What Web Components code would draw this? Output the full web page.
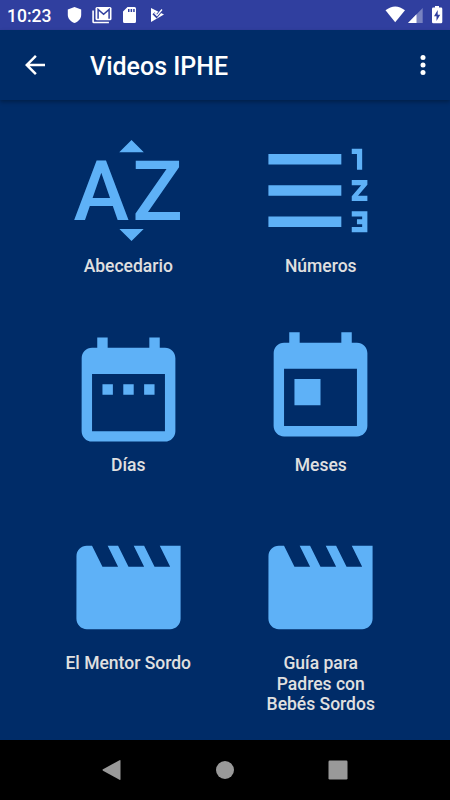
<!DOCTYPE html>
<html lang="es">
<head>
<meta charset="utf-8">
<meta name="viewport" content="width=device-width, initial-scale=1">
<title>Videos IPHE</title>
<style>
    html, body {
        margin: 0;
        height: 100%;
    }

    body {
        font-family: Roboto, "Noto Sans", sans-serif;
        overflow: hidden;
    }
</style>
</head>
<body>

<iphe-screen>
    <status-bar slot="status" time="10:23"></status-bar>
    <app-bar slot="bar">Videos IPHE</app-bar>
    <menu-tile icon="alphabet">Abecedario</menu-tile>
    <menu-tile icon="numbers">Números</menu-tile>
    <menu-tile icon="days">Días</menu-tile>
    <menu-tile icon="months">Meses</menu-tile>
    <menu-tile icon="movie">El Mentor Sordo</menu-tile>
    <menu-tile icon="movie">Guía para Padres con Bebés Sordos</menu-tile>
    <nav-bar slot="nav"></nav-bar>
</iphe-screen>

<script>
// Icons of the menu, all in a 24x24 box
const ICONS = {
    alphabet: `
        <path d="M14.94 4.66h-4.72l2.36-2.36zM10.25 19.37h4.66l-2.33 2.33z"/>
        <g font-size="16.1" font-weight="500">
            <text x="1.45" y="17.73">A</text>
            <text x="12.7" y="17.73">Z</text>
        </g>`,
    numbers: '<path d="M18 17h2v.5h-1v1h1v.5h-2v1h3v-4h-3v1zm1-9h1V4h-2v1h1v3zm-1 3h1.8L18 13.1v.9h3v-1h-1.8l1.8-2.1V10h-3v1zM2 5v2h14V5H2zm0 14h14v-2H2v2zm0-6h14v-2H2v2z"/>',
    days: '<path d="M9 11H7v2h2v-2zm4 0h-2v2h2v-2zm4 0h-2v2h2v-2zm2-7h-1V2h-2v2H8V2H6v2H5c-1.11 0-1.99.9-1.99 2L3 20c0 1.1.89 2 2 2h14c1.1 0 2-.9 2-2V6c0-1.1-.9-2-2-2zm0 16H5V9h14v11z"/>',
    months: '<path d="M19 3h-1V1h-2v2H8V1H6v2H5c-1.11 0-1.99.9-1.99 2L3 19c0 1.1.89 2 2 2h14c1.1 0 2-.9 2-2V5c0-1.1-.9-2-2-2zm0 16H5V8h14v11zM7 10h5v5H7z"/>',
    movie: '<path d="M18 4l2 4h-3l-2-4h-2l2 4h-3l-2-4H8l2 4H7L5 4H4c-1.1 0-1.99.9-1.99 2L2 18c0 1.1.9 2 2 2h16c1.1 0 2-.9 2-2V4h-4z"/>'
};

class IpheScreen extends HTMLElement {

    constructor() {
        super();
        this.attachShadow({ mode: 'open' });
        this.shadowRoot.innerHTML = `
            <style>
                :host {
                    display: flex;
                    flex-direction: column;
                    height: 100vh;
                    background: #002c68;
                }

                main {
                    flex: 1;
                    display: grid;
                    grid-template-columns: repeat(2, 192.5px);
                    grid-auto-rows: 198.6px;
                    justify-content: center;
                    align-content: start;
                    padding: 28px 1px 0 0;
                }
            </style>
            <slot name="status"></slot>
            <slot name="bar"></slot>
            <main><slot></slot></main>
            <slot name="nav"></slot>
        `;
    }

}

class StatusBar extends HTMLElement {

    constructor() {
        super();
        this.attachShadow({ mode: 'open' });
        this.shadowRoot.innerHTML = `
            <style>
                :host {
                    display: flex;
                    align-items: center;
                    height: 30px;
                    box-sizing: border-box;
                    padding: 0 7px;
                    background: #303f9f;
                    color: #fff;
                    font-size: 17.5px;
                    font-weight: 500;
                }

                span {
                    width: 60px;
                    padding-top: 2px;
                }

                svg {
                    display: block;
                    fill: #fff;
                    flex: none;
                }

                .left {
                    flex: 1;
                }
            </style>
            <span id="time"></span>
            <div class="left">
                <svg width="98" height="30" viewBox="67 0 98 30">
                    <path d="M74.500 7l6.700 2.500v5.500c0 3.500-2.800 6.700-6.700 8-3.900-1.300-6.700-4.500-6.700-8V9.500z"/>
                    <path d="M92.300 10.500h1.600v11.300h15v1.500H93.800q-1.500 0-1.500-1.500z"/>
                    <rect x="95.500" y="7" width="16" height="13.300" rx="1.500"/>
                    <path d="M98.100 18.700V9.500l5.500 4.700 5.500-4.700v9.200" fill="none" stroke="#303f9f" stroke-width="1.500"/>
                    <path fill-rule="evenodd" d="M127.500 7h7q1.500 0 1.500 1.500v13q0 1.500-1.500 1.500h-10q-1.500 0-1.500-1.500V11.500zM128 9v3h1.500V9zM130.600 9v3h1.500V9zM133.200 9v3h1.500V9z"/>
                    <path d="M151 8l13 6.500L151 22z"/>
                    <path d="M153.500 13.300l3 3L162.500 9" fill="none" stroke="#303f9f" stroke-width="3"/>
                    <path d="M154.500 13l2.500 2.500 5-6" fill="none" stroke="#fff" stroke-width="1.300"/>
                </svg>
            </div>
            <svg width="59" height="30" viewBox="384 0 59 30">
                <path d="M395.200 22.300L385.500 10.200q9.700-7.600 19.500 0z"/>
                <path d="M408 23L422.700 8v15z" fill-opacity=".35"/>
                <path d="M408 23l8.500-8.700V23z"/>
                <path fill-rule="evenodd" d="M435 6h4v1.600h2q1.300 0 1.300 1.300v13q0 1.300-1.300 1.300h-7.700q-1.300 0-1.300-1.300v-13q0-1.300 1.300-1.300h1.700zM437.700 10l-3.700 6.300h2.500V21l3.700-6.300h-2.500z"/>
            </svg>
        `;
    }

    connectedCallback() {
        this.shadowRoot.querySelector('#time').textContent = this.getAttribute('time');
    }

}

class AppBar extends HTMLElement {

    constructor() {
        super();
        this.attachShadow({ mode: 'open' });
        this.shadowRoot.innerHTML = `
            <style>
                :host {
                    display: flex;
                    align-items: center;
                    height: 70px;
                    box-sizing: border-box;
                    padding: 0 12.5px 0 20px;
                    background: #002c68;
                    color: #fff;
                    box-shadow: 0 2px 4px rgba(0, 0, 0, 0.3);
                }

                h1 {
                    flex: 1;
                    margin: 0 0 0 40px;
                    font-size: 25px;
                    font-weight: 500;
                    line-height: 30px;
                    padding-top: 4px;
                }

                svg {
                    width: 30px;
                    height: 30px;
                    fill: currentColor;
                }
            </style>
            <svg viewBox="0 0 24 24"><path d="M20 11H7.830l5.590-5.590L12 4l-8 8 8 8 1.410-1.410L7.830 13H20v-2z"/></svg>
            <h1><slot></slot></h1>
            <svg viewBox="0 0 24 24"><circle cx="12" cy="6" r="2"/><circle cx="12" cy="12" r="2"/><circle cx="12" cy="18" r="2"/></svg>
        `;
    }

}

class MenuTile extends HTMLElement {

    constructor() {
        super();
        this.attachShadow({ mode: 'open' });
        this.shadowRoot.innerHTML = `
            <style>
                :host {
                    display: flex;
                    flex-direction: column;
                    align-items: center;
                    color: #e0e0e0;
                }

                svg {
                    width: 125px;
                    height: 125px;
                    fill: #5eb1f7;
                    flex: none;
                }

                p {
                    width: 130px;
                    margin: 3px 0 0;
                    font-size: 17.5px;
                    font-weight: 500;
                    line-height: 20.5px;
                    text-align: center;
                }
            </style>
            <svg viewBox="0 0 24 24"></svg>
            <p><slot></slot></p>
        `;
    }

    connectedCallback() {
        this.shadowRoot.querySelector('svg').innerHTML = ICONS[this.getAttribute('icon')];
    }

}

class NavBar extends HTMLElement {

    constructor() {
        super();
        this.attachShadow({ mode: 'open' });
        this.shadowRoot.innerHTML = `
            <style>
                :host {
                    display: flex;
                    justify-content: center;
                    align-items: center;
                    gap: 82.5px;
                    height: 60px;
                    background: #000;
                }

                svg {
                    width: 30px;
                    height: 30px;
                    fill: #999;
                }
            </style>
            <svg viewBox="0 0 30 30"><path d="M21.500 5.200q1-.5 1 .5v18.600q0 1-1 .5L5 15.700q-1-.7 0-1.400z"/></svg>
            <svg viewBox="0 0 30 30"><circle cx="15" cy="15" r="9"/></svg>
            <svg viewBox="0 0 30 30"><rect x="5.500" y="5.500" width="19" height="19" rx="1.200"/></svg>
        `;
    }

}

customElements.define('iphe-screen', IpheScreen);
customElements.define('status-bar', StatusBar);
customElements.define('app-bar', AppBar);
customElements.define('menu-tile', MenuTile);
customElements.define('nav-bar', NavBar);
</script>
</body>
</html>
